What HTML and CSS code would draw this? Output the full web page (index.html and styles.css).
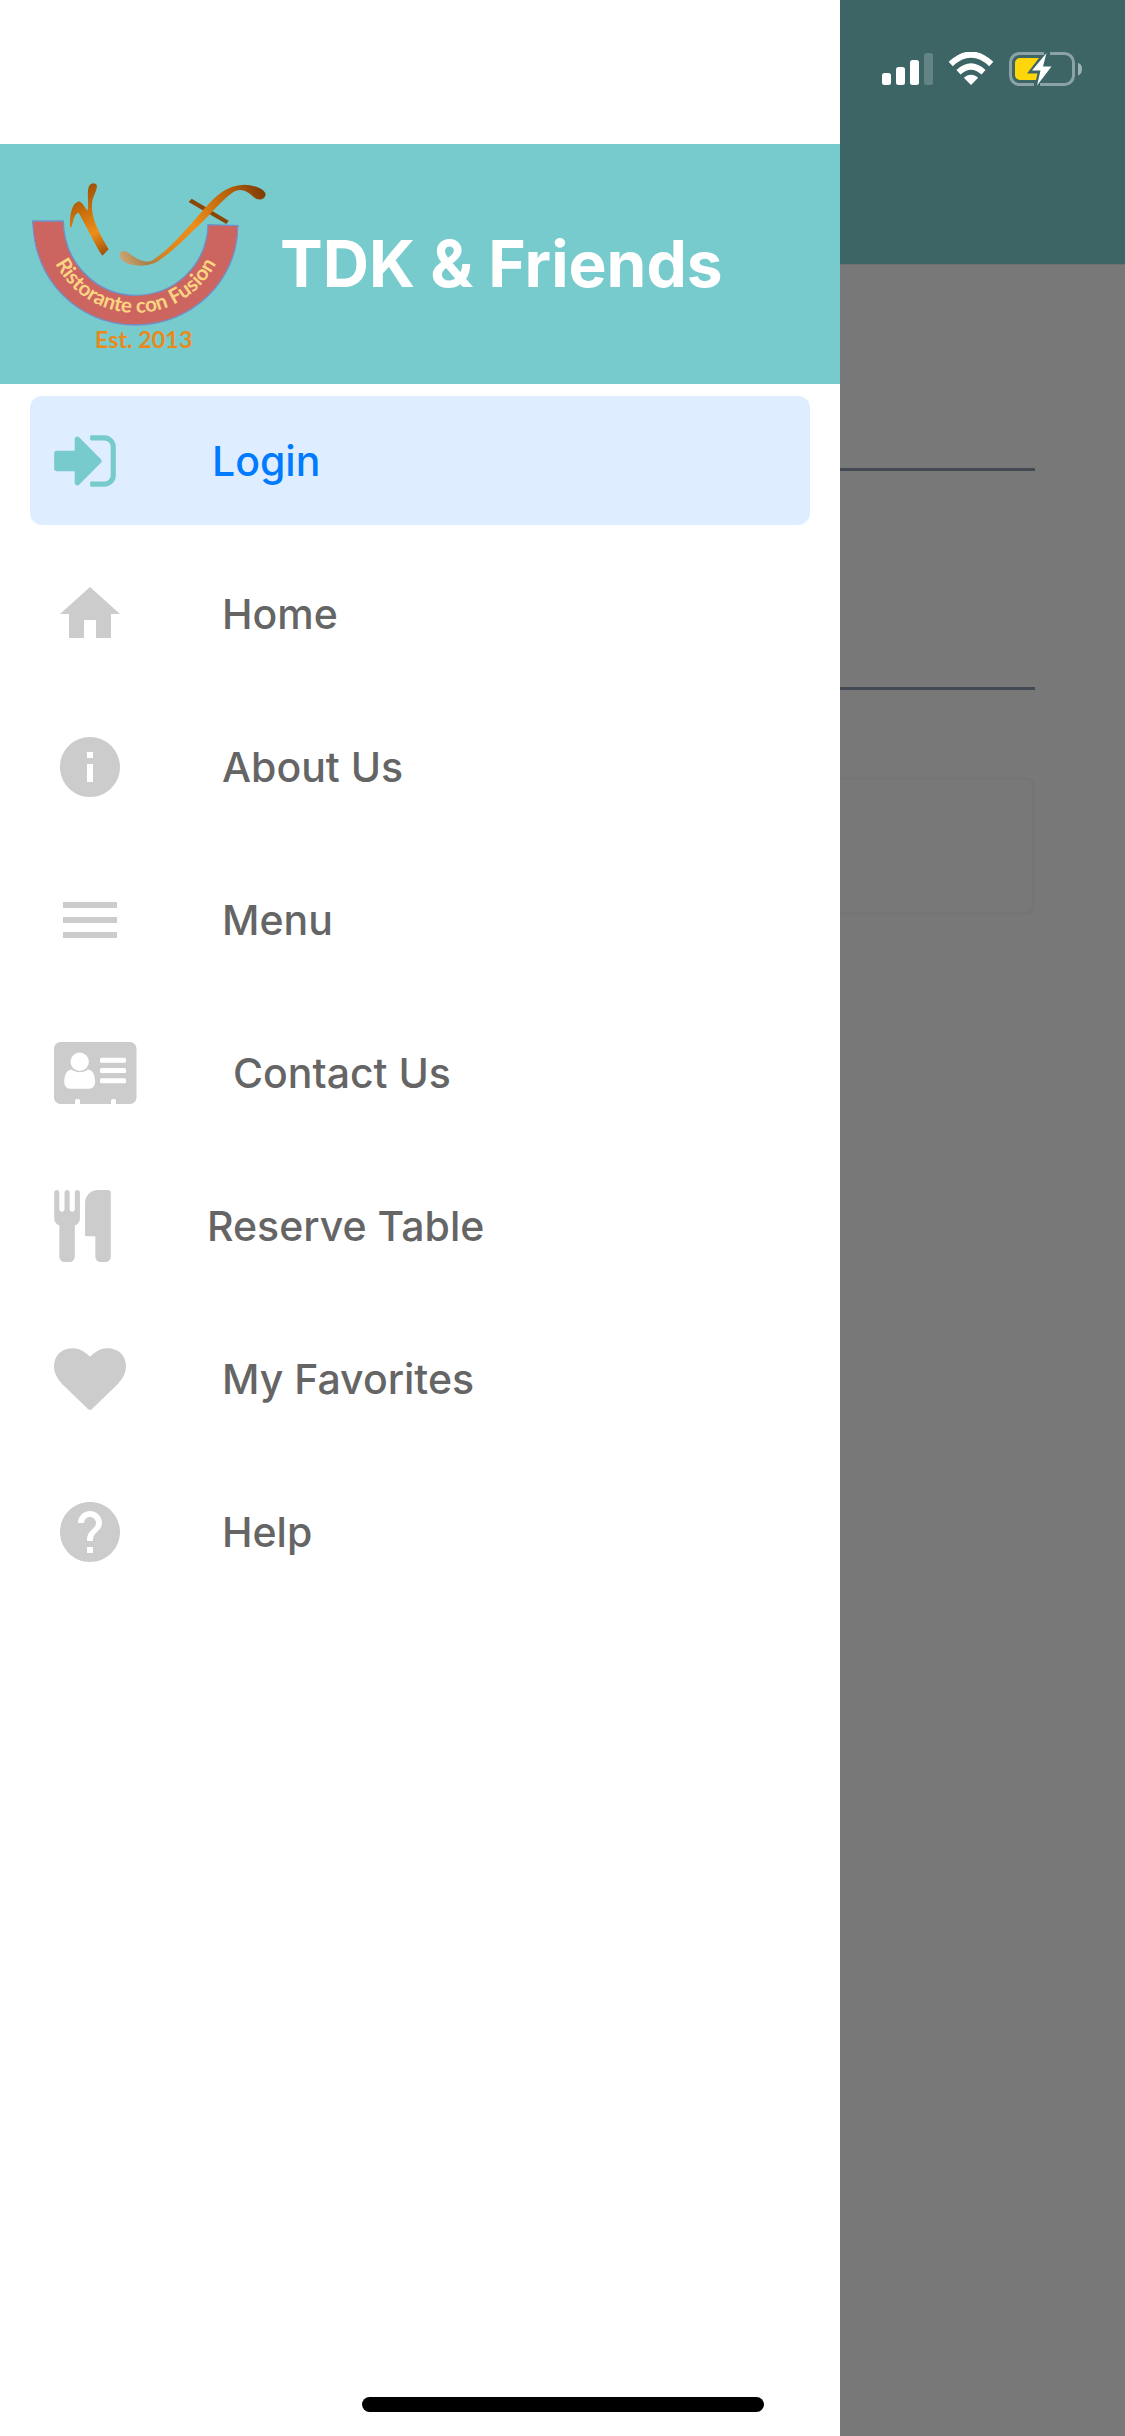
FILE: index.html
```html
<!DOCTYPE html>
<html lang="en">
<head>
<meta charset="utf-8">
<meta name="viewport" content="width=device-width, initial-scale=1">
<title>TDK &amp; Friends</title>
<link rel="stylesheet" href="styles.css">
</head>
<body>
<div class="screen">
  <aside class="drawer">
    <header class="drawer-header">
      <svg class="logo" viewBox="0 12 780 720" role="img" aria-label="Ristorante con Fusion">
        <defs>
          <linearGradient id="stem" gradientUnits="userSpaceOnUse" x1="150" y1="130" x2="260" y2="340">
            <stop offset="0" stop-color="#8a4304"/><stop offset=".4" stop-color="#c96f0c"/><stop offset=".7" stop-color="#ee8e1a"/><stop offset="1" stop-color="#a05208"/>
          </linearGradient>
          <linearGradient id="sweep" gradientUnits="userSpaceOnUse" x1="300" y1="360" x2="735" y2="150">
            <stop offset="0" stop-color="#cfa877"/><stop offset=".14" stop-color="#a98048"/><stop offset=".3" stop-color="#e2851a"/><stop offset=".5" stop-color="#ee8e1a"/><stop offset=".8" stop-color="#b45f0a"/><stop offset="1" stop-color="#7a3b03"/>
          </linearGradient>
          <path id="motto" d="M77 249A270 270 0 0 0 617 249"/>
        </defs>
        <path d="M40 255A307 309 0 0 0 653 264" fill="none" stroke="#d5dbe0" stroke-width="8"/>
        <path d="M38 243H130C132 370 230 466 347 466C465 466 560 375 564 254L654 257C652 425 515 555 347 555C175 555 40 420 38 243Z" fill="#cc6560" stroke="#6c92ca" stroke-width="4"/>
        <text class="logo-motto"><textPath href="#motto" startOffset="50%">Ristorante con Fusion</textPath></text>
        <text class="logo-year" x="371" y="625">Est. 2013</text>
        <path d="M150 262C149 222 155 190 177 184C189 188 194 204 203 212C207 188 200 161 206 141C211 127 229 127 231 138C229 158 217 171 216 193C215 225 222 253 266 328L247 347C227 318 208 275 176 218C161 222 160 245 154 262Z" fill="url(#stem)"/>
        <path d="M515 176L626 242L619 252L506 186Z" fill="#8a4605"/>
        <path d="M300 340C304 327 322 335 334 345C356 361 382 371 399 360C455 322 500 267 552 207C590 164 621 136 672 134C700 134 732 146 737 162C735 181 714 183 702 172C684 154 660 140 637 158C601 185 568 226 532 260C486 304 443 348 406 368C376 381 336 379 315 367C303 360 299 351 300 340Z" fill="url(#sweep)"/>
      </svg>
      <h1 class="brand">TDK &amp; Friends</h1>
    </header>
    <nav class="menu" aria-label="Main">
      <a class="item item-active" href="#login" aria-current="page">
        <svg class="icon" width="62" height="72" viewBox="128 0 1536 1792"><path d="M1312 896q0 26-19 45l-544 544q-19 19-45 19t-45-19-19-45v-288h-448q-26 0-45-19t-19-45v-384q0-26 19-45t45-19h448v-288q0-26 19-45t45-19 45 19l544 544q19 19 19 45zm352-352v704q0 119-84.500 203.500t-203.500 84.500h-320q-13 0-22.500-9.500t-9.500-22.500q0-4-1-20t-.5-26.500 3-23.500 10-19.500 20.500-6.500h320q66 0 113-47t47-113v-704q0-66-47-113t-113-47h-312l-11.500-1-11.500-3-8-5.500-7-9-2-13.500q0-4-1-20t-.5-26.500 3-23.500 10-19.500 20.500-6.500h320q119 0 203.500 84.500t84.500 203.500z"/></svg>
        <span>Login</span>
      </a>
      <a class="item" href="#home">
        <svg class="icon" width="72" height="72" viewBox="0 0 24 24"><path d="M10 20v-6h4v6h5v-8h3L12 3 2 12h3v8z"/></svg>
        <span>Home</span>
      </a>
      <a class="item" href="#about">
        <svg class="icon" width="72" height="72" viewBox="0 0 24 24"><path d="M12 2C6.480 2 2 6.480 2 12s4.480 10 10 10 10-4.480 10-10S17.520 2 12 2zm1 15h-2v-6h2v6zm0-8h-2V7h2v2z"/></svg>
        <span>About Us</span>
      </a>
      <a class="item" href="#menu">
        <svg class="icon" width="72" height="72" viewBox="0 0 24 24"><path d="M3 18h18v-2H3v2zm0-5h18v-2H3v2zm0-7v2h18V6H3z"/></svg>
        <span>Menu</span>
      </a>
      <a class="item" href="#contact">
        <svg class="icon" width="83" height="62" viewBox="0 0 83 62"><path fill-rule="evenodd" d="M6.500 0H76a6.500 6.500 0 0 1 6.500 6.500V55.500A6.500 6.500 0 0 1 76 62H62V58.500a1.500 1.500 0 0 0-1.500-1.500h-2a1.500 1.500 0 0 0-1.500 1.500V62H26V58.500a1.500 1.500 0 0 0-1.500-1.500h-2a1.500 1.500 0 0 0-1.500 1.500V62H6.500A6.500 6.500 0 0 1 0 55.500V6.500A6.500 6.500 0 0 1 6.500 0ZM25.700 10.500a9.200 9.200 0 1 0 0 18.400a9.200 9.200 0 0 0 0-18.400ZM17.500 27.500C12 28 10.300 34 10.300 40C10.300 44 13 46.700 16 46.700H35.500C38.500 46.700 41 44 41 40C41 34 39.500 28 34 27.500C29 31 22.500 31 17.500 27.500ZM47.500 15.700a1.500 1.500 0 0 0-1.500 1.500v2a1.500 1.500 0 0 0 1.500 1.500h23a1.500 1.500 0 0 0 1.500-1.500v-2a1.500 1.500 0 0 0-1.500-1.500ZM47.500 25.900a1.500 1.500 0 0 0-1.500 1.500v2a1.500 1.500 0 0 0 1.500 1.500h23a1.500 1.500 0 0 0 1.500-1.500v-2a1.500 1.500 0 0 0-1.500-1.500ZM47.500 36.200a1.500 1.500 0 0 0-1.500 1.500v2a1.500 1.500 0 0 0 1.500 1.500h23a1.500 1.500 0 0 0 1.500-1.500v-2a1.500 1.500 0 0 0-1.500-1.500Z"/></svg>
        <span>Contact Us</span>
      </a>
      <a class="item" href="#reserve">
        <svg class="icon" width="57" height="72" viewBox="192 0 1408 1792"><path d="M832 64v640q0 61-35.500 111t-92.500 70v779q0 52-38 90t-90 38h-128q-52 0-90-38t-38-90v-779q-57-20-92.500-70t-35.500-111v-640q0-26 19-45t45-19 45 19 19 45v416q0 26 19 45t45 19 45-19 19-45v-416q0-26 19-45t45-19 45 19 19 45v416q0 26 19 45t45 19 45-19 19-45v-416q0-26 19-45t45-19 45 19 19 45zm768 0v1600q0 52-38 90t-90 38h-128q-52 0-90-38t-38-90v-512h-224q-13 0-22.500-9.500t-9.500-22.500v-800q0-132 94-226t226-94h256q26 0 45 19t19 45z"/></svg>
        <span>Reserve Table</span>
      </a>
      <a class="item" href="#favorites">
        <svg class="icon" width="72" height="72" viewBox="0 0 1792 1792"><path d="M896 1664q-26 0-44-18l-624-602q-10-8-27.500-26t-55.500-65.500-68-97.500-53.500-121-23.500-138q0-220 127-344t351-124q62 0 126.500 21.500t120 58 95.500 68.500 76 68q36-36 76-68t95.500-68.500 120-58 126.500-21.500q224 0 351 124t127 344q0 221-229 450l-623 600q-18 18-44 18z"/></svg>
        <span>My Favorites</span>
      </a>
      <a class="item" href="#help">
        <svg class="icon" width="72" height="72" viewBox="0 0 24 24"><path d="M12 2C6.480 2 2 6.480 2 12s4.480 10 10 10 10-4.480 10-10S17.520 2 12 2zm1 17h-2v-2h2v2zm2.070-7.750l-.9.920C13.450 12.900 13 13.500 13 15h-2v-.5c0-1.100.45-2.100 1.170-2.830l1.240-1.260c.37-.36.59-.86.59-1.410 0-1.100-.9-2-2-2s-2 .9-2 2H8c0-2.210 1.790-4 4-4s4 1.790 4 4c0 .88-.36 1.680-.93 2.250z"/></svg>
        <span>Help</span>
      </a>
    </nav>
  </aside>
  <main class="page">
    <div class="top-bar">
      <svg class="status" width="202" height="36" viewBox="0 0 202 36" aria-hidden="true">
        <g fill="#fff">
          <rect x="0" y="21" width="9" height="12" rx="2.500"/>
          <rect x="14" y="15" width="9" height="18" rx="2.500"/>
          <rect x="28" y="8" width="9" height="25" rx="2.500"/>
          <rect x="42" y="1" width="9" height="32" rx="2.500" opacity=".2"/>
          <path d="M89 33L82.300 26.300Q81.900 25.500 82.700 25Q89 20.500 95.300 25Q96.100 25.500 95.700 26.300Z"/>
        </g>
        <path d="M76.500 20.200Q89 8.800 101.500 20.200M68.700 12Q89-6.800 109.300 12" fill="none" stroke="#fff" stroke-width="6"/>
        <path d="M162 1.500H137.500A9 9 0 0 0 128.500 10.500V23.500A9 9 0 0 0 137.500 32.500H152M168 1.500H182.500A9 9 0 0 1 191.500 10.500V23.500A9 9 0 0 1 182.500 32.500H158" fill="none" stroke="#8ba3a4" stroke-width="3"/>
        <path d="M196 11Q200 12 200 17T196 23.500Z" fill="#9eb2b3"/>
        <path d="M138 6H157L145 21.500H155.500L154 28H138A5 5 0 0 1 133 23V11A5 5 0 0 1 138 6Z" fill="#ffd60a"/>
        <path d="M164.500 1L150 18.500H158.500L155 33.500L169.500 14.500H161Z" fill="#fff"/>
      </svg>
    </div>
    <form class="form">
      <input class="field" type="text" aria-label="Username">
      <input class="field" type="password" aria-label="Password">
      <button class="submit" type="button" aria-label="Login"></button>
    </form>
  </main>
  <div class="home-indicator"></div>
</div>
</body>
</html>
```
FILE: styles.css
```css
* {
  box-sizing: border-box;
}

body {
  margin: 0;
  font-family: Inter, "Liberation Sans", sans-serif;
}

.screen {
  position: relative;
  display: grid;
  grid-template-columns: 56fr 19fr;
  min-height: 100vh;
}

.drawer {
  padding-top: 144px;
  background: #fff;
}

.drawer-header {
  display: flex;
  align-items: center;
  height: 240px;
  padding-left: 20px;
  background: #78cbcd;
}

.logo {
  width: 260px;
  height: 240px;
}

.logo-motto {
  font-family: Lato, sans-serif;
  font-size: 62px;
  font-weight: 700;
  text-anchor: middle;
  fill: #fbd482;
}

.logo-year {
  font-family: Lato, sans-serif;
  font-size: 70px;
  font-weight: 700;
  text-anchor: middle;
  fill: #e88a1c;
}

.brand {
  margin: 0;
  color: #fff;
  font-size: 64px;
  font-weight: 700;
  line-height: 80px;
  white-space: nowrap;
}

.menu {
  display: flex;
  flex-direction: column;
  gap: 24px;
  padding: 12px 30px;
}

.item {
  display: flex;
  align-items: center;
  gap: 96px;
  height: 129px;
  padding: 0 24px;
  border-radius: 12px;
  color: #656565;
  font-size: 41px;
  font-weight: 500;
  line-height: 50px;
  text-decoration: none;
}

.item-active {
  background: #deedff;
  color: #007aff;
}

.icon {
  flex: none;
  fill: #ccc;
}

.item-active .icon {
  fill: #78cbcd;
}

.page {
  background: #787878;
}

.top-bar {
  display: flex;
  justify-content: flex-end;
  height: 265px;
  padding: 52px 41px 0 0;
  border-bottom: 1px solid #6c7070;
  background: #3d6566;
}

.form {
  display: flex;
  flex-direction: column;
  padding: 83px 90px 0 0;
}

.field {
  width: 100%;
  height: 123px;
  margin: 0 0 96px;
  padding: 0;
  border: 0;
  border-bottom: 3px solid #434a54;
  border-radius: 0;
  background: transparent;
  font: inherit;
  font-size: 41px;
}

.field + .field {
  margin-bottom: 87px;
}

.submit {
  height: 138px;
  border: 3px solid #757575;
  border-left: 0;
  border-radius: 0 9px 9px 0;
  background: transparent;
}

.home-indicator {
  position: absolute;
  bottom: 24px;
  left: 50%;
  width: 402px;
  height: 15px;
  margin-left: -201px;
  border-radius: 8px;
  background: #000;
}
```
